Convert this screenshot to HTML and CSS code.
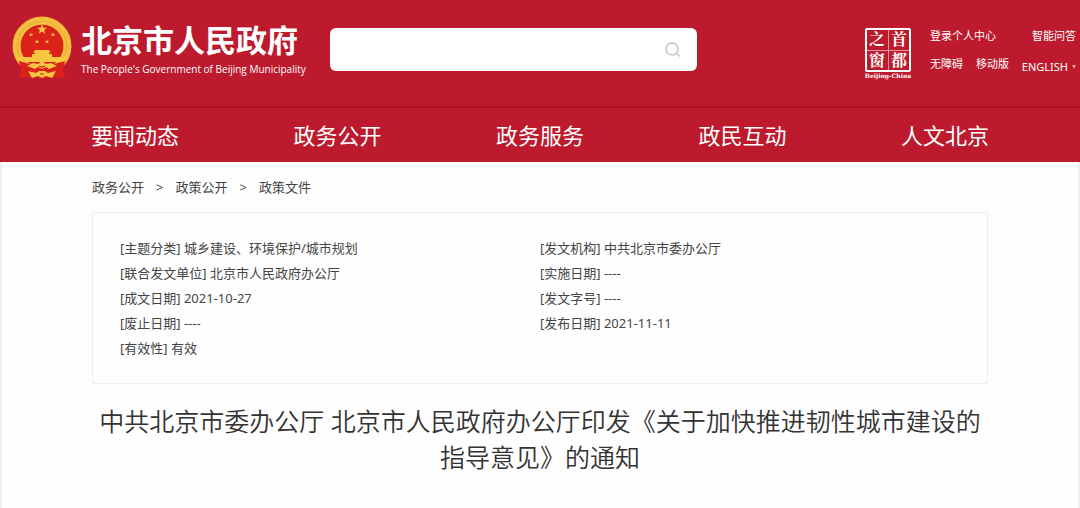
FILE: index.html
```html
<!DOCTYPE html>
<html lang="zh-CN">
<head>
<meta charset="utf-8">
<title>北京市人民政府</title>
<link rel="stylesheet" href="styles.css">
</head>
<body>
<header class="masthead">
  <a class="brand" href="#">
    <svg class="emblem" viewBox="0 0 60 64" aria-hidden="true">
      <circle cx="30" cy="30" r="25.500" fill="#dc2119" stroke="#f0b53a" stroke-width="8"/>
      <circle cx="30" cy="30" r="27" fill="none" stroke="#f4c244" stroke-width="2"/>
      <circle cx="30" cy="30" r="22.500" fill="none" stroke="#f6c744" stroke-width="1.500"/>
      <g fill="#f8c640">
        <path d="M30 8l1.300 3.700h3.900L32.100 14l1.200 3.800L30 15.500l-3.300 2.300L27.900 14l-3.100-2.300h3.900z"/>
        <path id="s" d="M19 16.500l.6 1.500h1.700l-1.300 1 .5 1.600-1.500-1-1.500 1 .5-1.600-1.300-1h1.700z"/>
        <use href="#s" x="22"/>
        <use href="#s" x="6" y="7"/>
        <use href="#s" x="16" y="7"/>
        <path d="M23 34h14l2 2.500h-2V38h3v3h14l-2 5H8l-2-5h14v-3h3v-1.500h-2z"/>
      </g>
      <path fill="#dc2119" d="M7 45L14 47L23 49L30 46L37 49L46 47L53 45L51 54L53 62L40 61L30 63L20 61L8 62L9 54Z"/>
      <g fill="#f8c640">
        <path d="M15 50l6-3 5 1 4-3 4 3 5-1 6 3-8 3-3-2-4 2-4-2-3 2z"/>
        <path d="M16 55l8 2 3-2h6l3 2 8-2-4 7-6-2-4 2-4-2-6 2z"/>
      </g>
      <path fill="none" stroke="#dc2119" stroke-width="1.200" d="M27 50l3 1 3-1M28 58h4"/>
    </svg>
    <span class="brand-text">
      <span class="brand-cn">北京市人民政府</span>
      <span class="brand-en">The People's Government of Beijing Municipality</span>
    </span>
  </a>
  <form class="search">
    <input class="search-input" type="search" aria-label="搜索">
    <button class="search-button" type="button" aria-label="搜索">
      <svg viewBox="0 0 16 16" width="16" height="16" fill="none" stroke="#c4c4c4" stroke-width="1.500" stroke-linecap="round"><circle cx="7" cy="7" r="6"/><path d="M11.500 11.500L14.500 14"/></svg>
    </button>
  </form>
  <a class="capital" href="#">
    <span class="seal"><span>之</span><span>首</span><span>窗</span><span>都</span></span>
    <span class="capital-en">Beijing-China</span>
  </a>
  <div class="tools">
    <div class="tools-row"><a href="#">登录个人中心</a><a href="#">智能问答</a></div>
    <div class="tools-row"><a href="#">无障碍</a><a href="#">移动版</a><button class="lang" type="button">ENGLISH<span class="caret"></span></button></div>
  </div>
</header>
<nav class="nav">
  <a href="#">要闻动态</a><a href="#">政务公开</a><a href="#">政务服务</a><a href="#">政民互动</a><a href="#">人文北京</a>
</nav>
<main class="page">
  <nav class="crumbs" aria-label="当前位置">
    <a href="#">政务公开</a><span>&gt;</span><a href="#">政策公开</a><span>&gt;</span><a href="#">政策文件</a>
  </nav>
  <section class="meta">
    <ul class="meta-list">
      <li>[主题分类] 城乡建设、环境保护/城市规划</li>
      <li>[联合发文单位] 北京市人民政府办公厅</li>
      <li>[成文日期] 2021-10-27</li>
      <li>[废止日期] ----</li>
      <li>[有效性] 有效</li>
    </ul>
    <ul class="meta-list">
      <li>[发文机构] 中共北京市委办公厅</li>
      <li>[实施日期] ----</li>
      <li>[发文字号] ----</li>
      <li>[发布日期] 2021-11-11</li>
    </ul>
  </section>
  <h1 class="title">中共北京市委办公厅 北京市人民政府办公厅印发《关于加快推进韧性城市建设的指导意见》的通知</h1>
</main>
</body>
</html>
```
FILE: styles.css
```css
* { box-sizing: border-box; }
body {
  margin: 0;
  background: #f1f1f1;
  color: #444;
  font-family: "Noto Sans", "Noto Sans CJK SC", sans-serif;
  font-size: 13px;
}
a { color: inherit; text-decoration: none; }
button { padding: 0; border: 0; background: none; color: inherit; font: inherit; }

.masthead {
  display: flex;
  align-items: flex-start;
  padding: 16px 4px 26px 12px;
  background: #be1a2d;
  color: #fff;
}
.brand { display: flex; gap: 9px; }
.emblem { width: 60px; height: 64px; }
.brand-text { display: flex; flex-direction: column; width: 220px; padding-top: 4px; white-space: nowrap; }
.brand-cn { font-size: 31px; line-height: 40px; font-weight: 700; }
.brand-en { font-family: "Open Sans", sans-serif; font-size: 10px; line-height: 18px; }

.search {
  display: flex;
  align-items: center;
  flex: 0 1 367px;
  height: 43px;
  margin: 12px 24px 0 29px;
  padding-right: 16px;
  border-radius: 6px;
  background: #fff;
}
.search-input { flex: 1; min-width: 0; height: 100%; padding: 0 12px; border: 0; outline: 0; background: none; font: inherit; }
.search-button { display: flex; }

.capital { display: flex; flex-direction: column; align-items: center; width: 50px; margin: 12px 17px 0 auto; }
.seal {
  display: grid;
  grid-template: 1fr 1fr / 1fr 1fr;
  gap: 2px;
  width: 46px;
  height: 44px;
  border: 2px solid #fff;
  border-radius: 2px;
  background: linear-gradient(#e6949e, #e6949e) center / 1px 100% no-repeat, linear-gradient(#e6949e, #e6949e) center / 100% 1px no-repeat;
  font-family: "Noto Serif CJK SC", "Noto Sans CJK SC", serif;
  font-size: 16px;
  line-height: 18px;
  font-weight: 700;
  text-align: center;
}
.capital-en { font: 700 6px/8px "DejaVu Serif", serif; white-space: nowrap; }

.tools { display: flex; flex-direction: column; gap: 12px; width: 146px; padding-top: 12px; font-size: 11px; line-height: 16px; white-space: nowrap; }
.tools-row { display: flex; justify-content: space-between; }
.lang { display: flex; align-items: center; gap: 4px; padding-top: 3px; line-height: 16px; }
.caret { border: 2px solid transparent; border-top: 4px solid #e6949e; border-bottom: 0; }

.nav {
  display: flex;
  justify-content: space-between;
  padding: 0 91px;
  border-top: 2px solid #ad1226;
  background: #be1a2d;
  color: #fff;
  font-size: 22px;
  line-height: 54px;
}

.page { margin: 0 2px; padding: 16px 90px 34px; background: #fefefe; }
.crumbs { display: flex; gap: 12px; line-height: 18px; }
.meta {
  display: grid;
  grid-template-columns: 420px 1fr;
  margin-top: 16px;
  padding: 23px 27px 22px;
  border: 1px solid #efefef;
}
.meta-list { margin: 0; padding: 0; list-style: none; line-height: 25px; }
.title { margin: 19px 0 0; color: #333; font-size: 25px; line-height: 36px; font-weight: 350; text-align: center; }
```
